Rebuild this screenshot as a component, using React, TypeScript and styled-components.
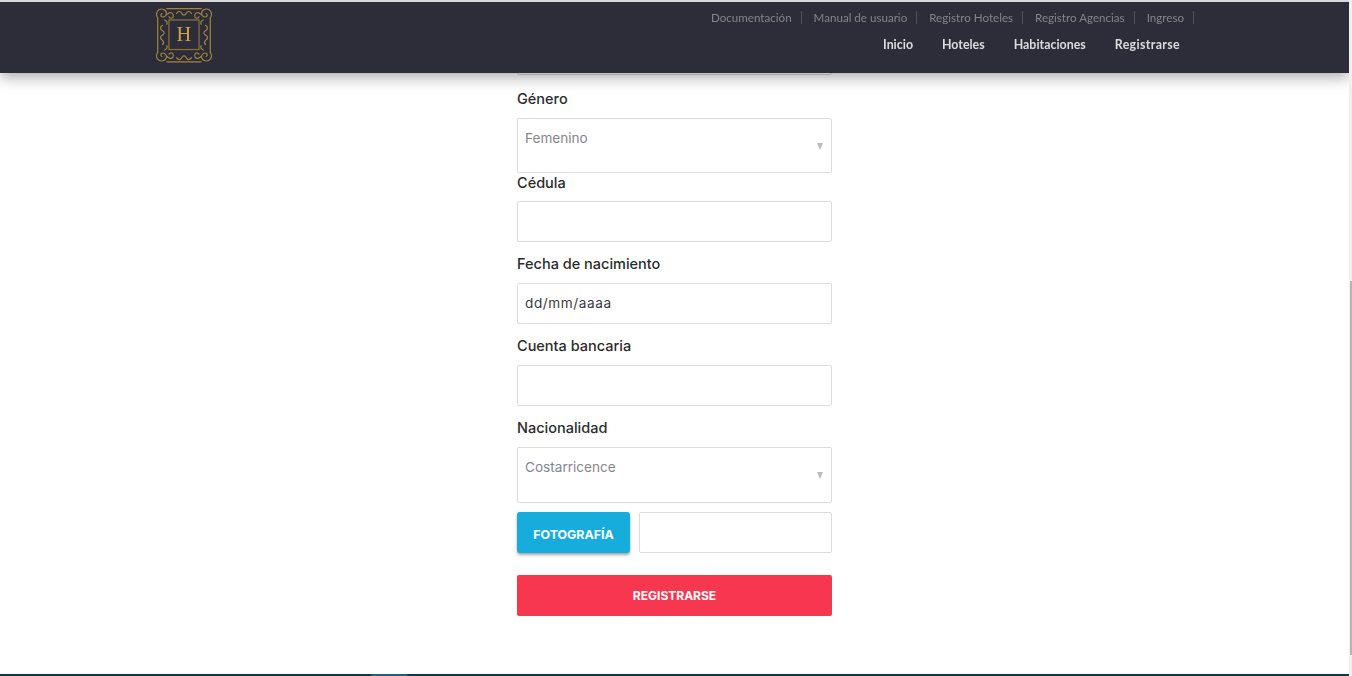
import styled, { createGlobalStyle } from "styled-components";

const GlobalStyle = createGlobalStyle`
  html, body {
    margin:0;
    padding:0;
    height:100%;
    overflow:hidden;
    background:#fff;
  }
  * {
    box-sizing:border-box;
  }
`

const Page = styled.div`
  height:676px;
  display:flex;
  flex-direction:column;
  background:#fff;
  font-family:"Inter", "Liberation Sans", sans-serif;
`

const TopEdge = styled.div`
  position:fixed;
  top:0;
  left:0;
  right:3px;
  z-index:3;
  height:2px;
  background:#d8d8d8;
`

const Header = styled.header`
  position:fixed;
  top:2px;
  left:0;
  right:3px;
  z-index:2;
  height:71px;
  padding:0 169px 0 155px;
  display:flex;
  justify-content:space-between;
  background:#2c2d38;
  box-shadow:0 4px 14px rgba(0,0,0,0.35);
`

const Logo = styled.svg`
  width:58px;
  height:58px;
  margin-top:4px;
`

const Nav = styled.div`
  display:flex;
  flex-direction:column;
  align-items:flex-end;
`

const TopLinks = styled.div`
  display:flex;
  margin-top:9px;
  margin-right:-14px;
  font-family:"Lato", sans-serif;
  font-size:11.6px;
  line-height:13px;
  color:#84848a;
`

const TopLink = styled.span`
  padding:0 9px 0 12px;
  border-right:1px solid #4f5059;
`

const MainLinks = styled.div`
  display:flex;
  gap:29px;
  margin-top:13px;
  font-family:"Lato", sans-serif;
  font-size:12.4px;
  font-weight:700;
  line-height:15px;
  color:#dcdcdc;
`

const WideLink = styled.span`
  letter-spacing:0.35px;
`

const Main = styled.main`
  flex:1;
  width:315px;
  margin-left:517px;
  padding-top:34px;
`

const Label = styled.div`
  height:41px;
  padding-top:12px;
  font-size:14.5px;
  font-weight:500;
  line-height:20px;
  color:#2b2b2b;
`

const FirstLabel = styled(Label)`
  height:43px;
  padding-top:14px;
`

const TightLabel = styled(Label)`
  height:28px;
  padding-top:0;
`

const Field = styled.div<{ $height: number }>`
  position:relative;
  height:${(p) => p.$height}px;
  padding:11px 7px 0;
  background:#fff;
  border:1px solid #dcdcdc;
  border-radius:2px;
  font-size:13.6px;
  line-height:17px;
  color:#2f2f3a;
`

const Placeholder = styled.span`
  color:#85858f;
`

const DateValue = styled.span`
  font-size:13.6px;
  letter-spacing:0.6px;
  color:#3a3a44;
`

const Arrow = styled.span`
  position:absolute;
  right:8px;
  top:50%;
  margin-top:-3px;
  border-left:3.5px solid transparent;
  border-right:3.5px solid transparent;
  border-top:7px solid #bcbcbc;
`

const UploadRow = styled.div`
  display:flex;
  gap:9px;
  margin-top:9px;
`

const UploadButton = styled.div`
  width:113px;
  height:41px;
  padding-top:3px;
  display:flex;
  align-items:center;
  justify-content:center;
  background:#16acdc;
  border-radius:3px;
  box-shadow:0 2px 3px rgba(0,0,0,0.35);
  font-size:12.4px;
  font-weight:700;
  color:#fff;
`

const UploadField = styled(Field)`
  flex:1;
`

const SubmitButton = styled.div`
  height:41px;
  margin-top:22px;
  display:flex;
  align-items:center;
  justify-content:center;
  background:#f73650;
  border-radius:2px;
  font-size:12px;
  font-weight:700;
  color:#fff;
`

const Footer = styled.footer`
  height:2px;
  display:flex;
  background:#053a4e;
`

const FooterShine = styled.div`
  width:36px;
  margin-left:371px;
  background:#16647f;
`

const Scrollbar = styled.div`
  position:fixed;
  top:0;
  right:0;
  z-index:4;
  width:3px;
  height:676px;
  background:#f0f0f0;
`

const ScrollThumb = styled.div`
  width:2px;
  height:374px;
  margin:281px 0 0 1px;
  background:#b5b5b5;
`

const BrandMark = () => {
  return (
    <Logo viewBox="2 2 54 54" fill="none" stroke="#a1843f" strokeWidth="1.1" strokeLinecap="round">
      {/* inner square and the frame round it */}
      <rect x="15" y="15" width="28" height="27.5" strokeWidth="1.1" stroke="#8f7438" />
      <path d="M13 4.5h32M13 54h32M4.5 13v32M53.5 13v32" />
      {/* corner knots */}
      <path d="M4.5 13c-3-5 1-9 5-8 4 1 4 6 1 7-3 1-4-2-2-3M53.5 13c3-5-1-9-5-8-4 1-4 6-1 7 3 1 4-2 2-3" />
      <path d="M4.5 45c-3 5 1 9 5 8 4-1 4-6 1-7-3-1-4 2-2 3M53.5 45c3 5-1 9-5 8-4-1-4-6-1-7 3-1 4 2 2 3" />
      {/* scrolls along each side */}
      <path d="M13 10c3-3 6-2 6 1s-3 3-4 1M45 10c-3-3-6-2-6 1s3 3 4 1M13 49c3 3 6 2 6-1s-3-3-4-1M45 49c-3 3-6 2-6-1s3-3 4-1" />
      <path d="M22 9c2-3 4-2 5 0 1 2 3 2 4 0 1-2 3-3 5 0M22 50c2 3 4 2 5 0 1-2 3-2 4 0 1 2 3 3 5 0" />
      <path d="M9 20c-3 2-2 4 0 5 2 1 2 3 0 4-2 1-3 3 0 5 1 1 2 2 0 4M49 20c3 2 2 4 0 5-2 1-2 3 0 4 2 1 3 3 0 5-1 1-2 2 0 4" />
      <path d="M11 15c2 1 3 2 2 4M47 15c-2 1-3 2-2 4M11 43c2-1 3-2 2-4M47 43c-2-1-3-2-2-4" />
      <text x="29" y="35" textAnchor="middle" fontFamily="Liberation Serif, serif" fontSize="19" fill="#d0a44a" stroke="none">
        H
      </text>
    </Logo>
  )
}

const App = () => {
  return (
    <Page>
      <GlobalStyle />
      <TopEdge />
      <Header>
        <BrandMark />
        <Nav>
          <TopLinks>
            <TopLink>Documentación</TopLink>
            <TopLink>Manual de usuario</TopLink>
            <TopLink>Registro Hoteles</TopLink>
            <TopLink>Registro Agencias</TopLink>
            <TopLink>Ingreso</TopLink>
          </TopLinks>
          <MainLinks>
            <span>Inicio</span>
            <span>Hoteles</span>
            <span>Habitaciones</span>
            <WideLink>Registrarse</WideLink>
          </MainLinks>
        </Nav>
      </Header>
      <Main>
        <Field $height={41} />
        <FirstLabel>Género</FirstLabel>
        <Field $height={55}>
          <Placeholder>Femenino</Placeholder>
          <Arrow />
        </Field>
        <TightLabel>Cédula</TightLabel>
        <Field $height={41} />
        <Label>Fecha de nacimiento</Label>
        <Field $height={41}>
          <DateValue>dd/mm/aaaa</DateValue>
        </Field>
        <Label>Cuenta bancaria</Label>
        <Field $height={41} />
        <Label>Nacionalidad</Label>
        <Field $height={56}>
          <Placeholder>Costarricence</Placeholder>
          <Arrow />
        </Field>
        <UploadRow>
          <UploadButton>FOTOGRAFÍA</UploadButton>
          <UploadField $height={41} />
        </UploadRow>
        <SubmitButton>REGISTRARSE</SubmitButton>
      </Main>
      <Footer>
        <FooterShine />
      </Footer>
      <Scrollbar>
        <ScrollThumb />
      </Scrollbar>
    </Page>
  )
}

export default App;
